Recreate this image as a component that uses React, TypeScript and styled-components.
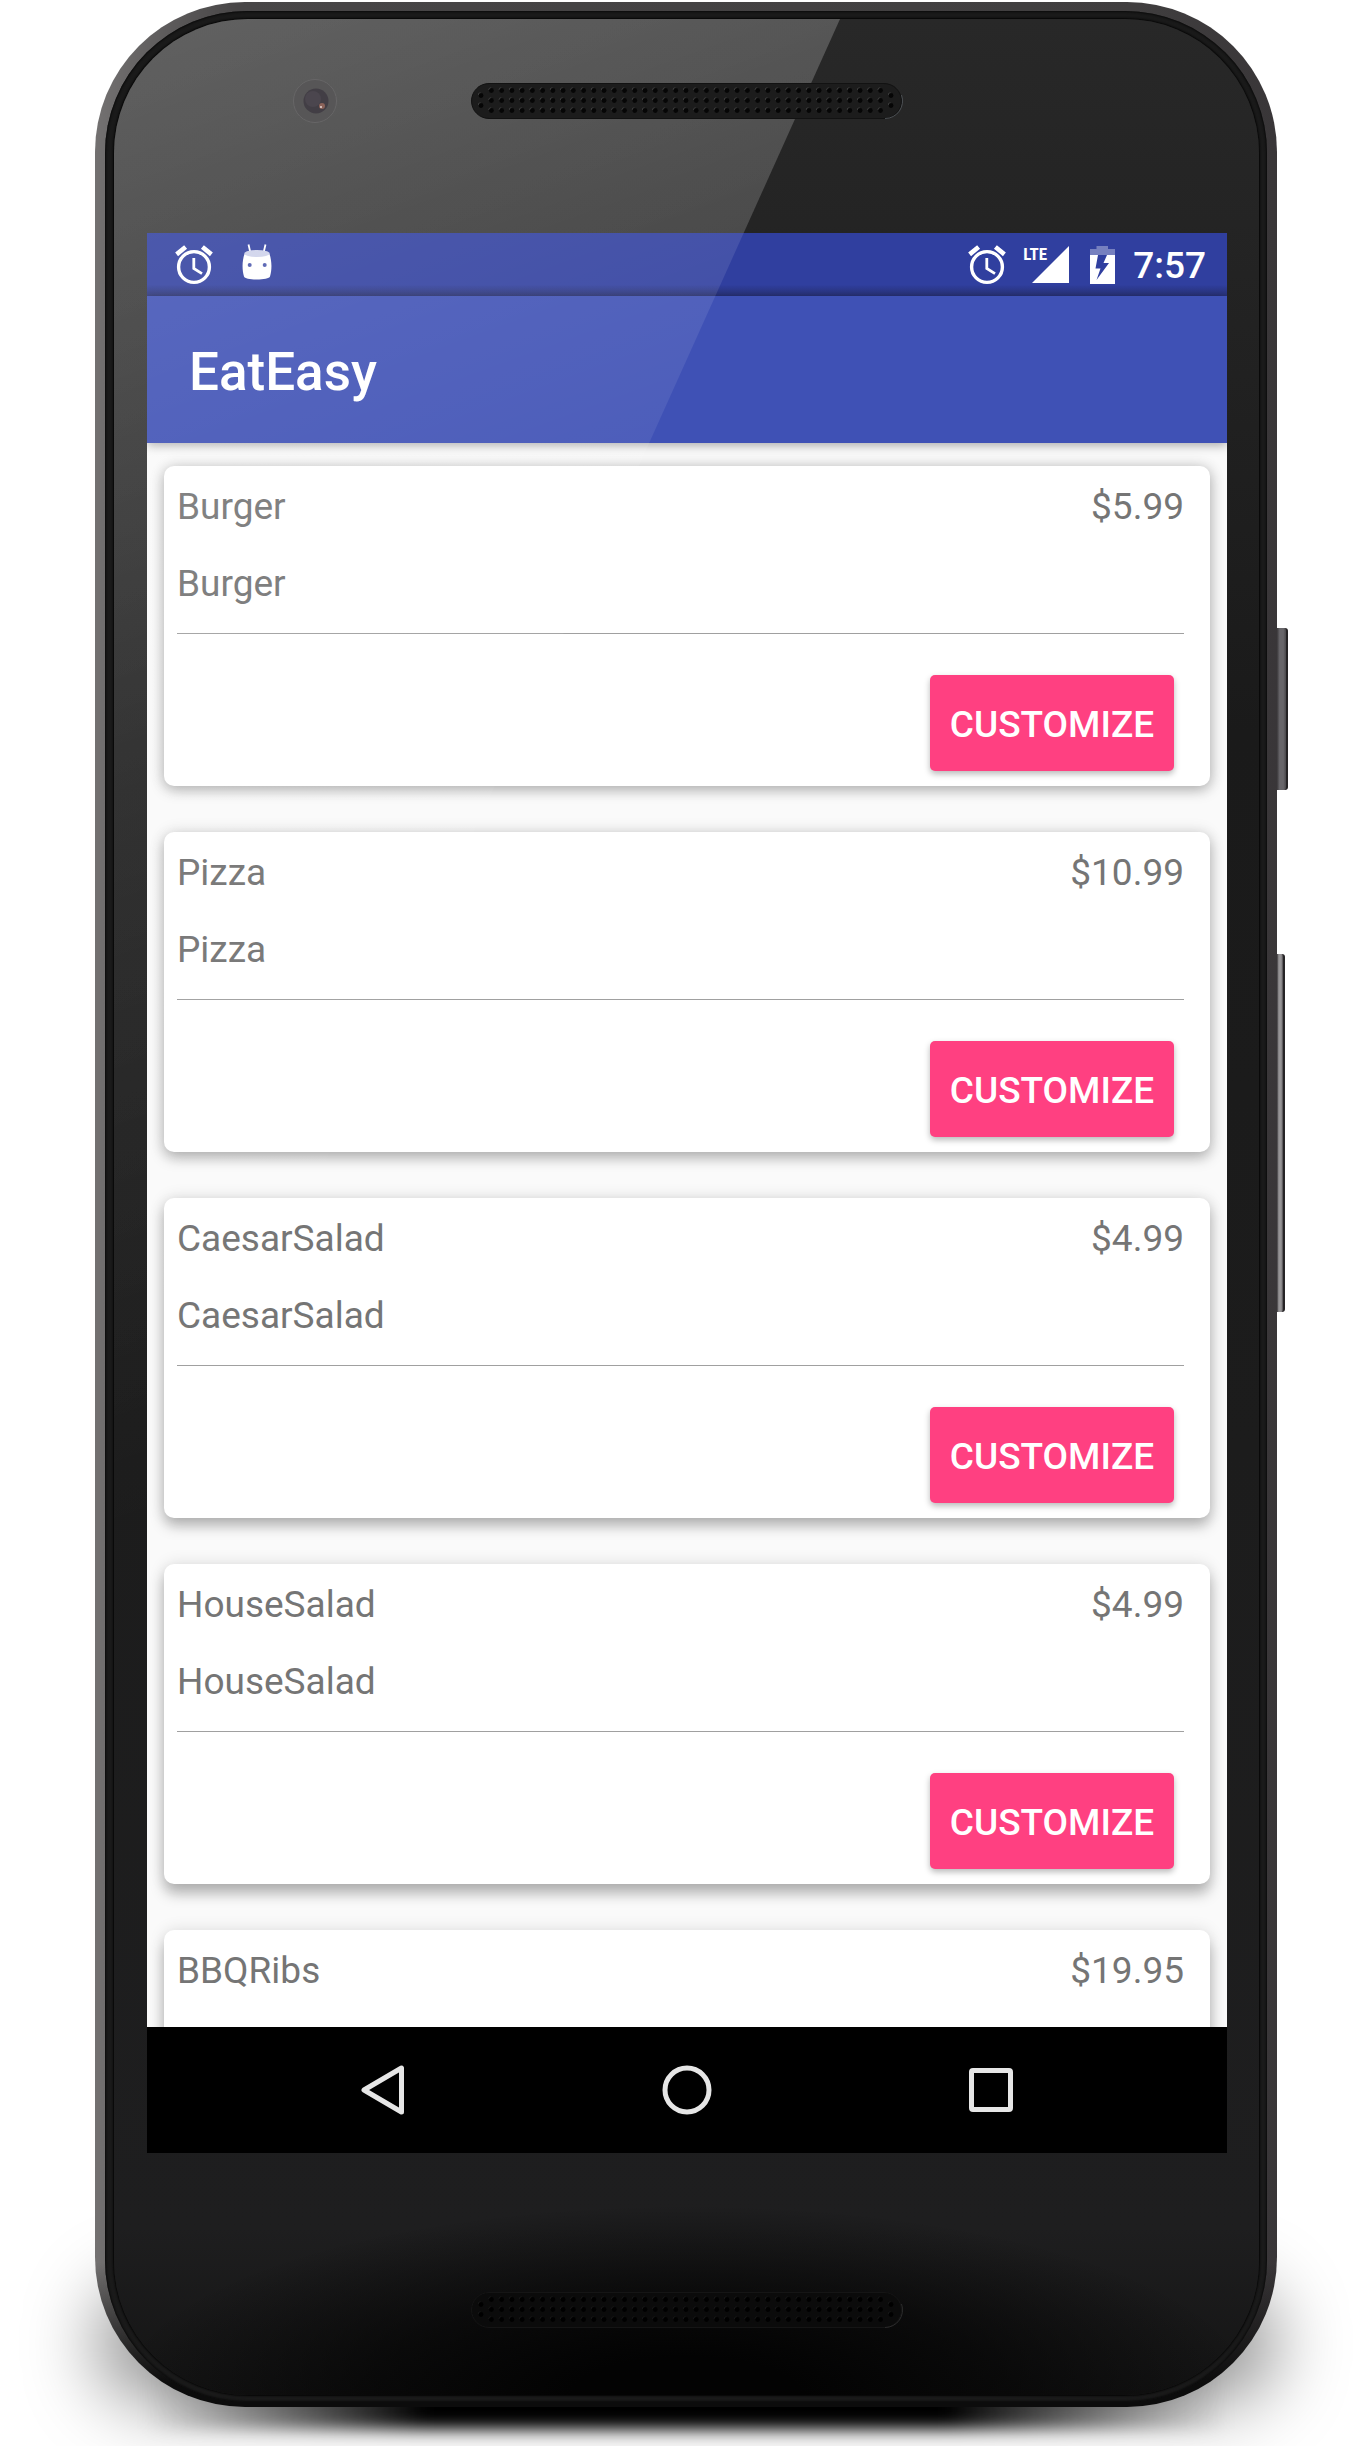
import React from "react";
import styled, { createGlobalStyle } from "styled-components";

const GlobalStyle = createGlobalStyle`
  * { box-sizing: border-box; }
  body {
    margin: 0;
    background: #fff;
    font-family: Roboto, "Noto Sans", "Liberation Sans", sans-serif;
  }
  button { font: inherit; border: 0; padding: 0; cursor: pointer; }
`;

const Page = styled.div`
  display: flex;
  justify-content: center;
  padding: 2px 93px 39px 95px;
  overflow: hidden;
`;

const Device = styled.div`
  position: relative;
  isolation: isolate;
  flex: 1;
  max-width: 1182px;
`;

const WideShadow = styled.div`
  position: absolute;
  z-index: -1;
  left: 0;
  right: 0;
  bottom: 4px;
  height: 120px;
  border-radius: 60px;
  background: rgba(0, 0, 0, 0.42);
  filter: blur(36px);
`;

const ContactShadow = styled.div`
  position: absolute;
  z-index: -1;
  left: 50px;
  right: 50px;
  bottom: -22px;
  height: 60px;
  background: linear-gradient(90deg, transparent, #000 26%, #000 74%, transparent);
  filter: blur(8px);
`;

const SideKey = styled.div<{ $top: number; $height: number; $width: number; $tone: string }>`
  position: absolute;
  left: 100%;
  top: ${(p) => p.$top}px;
  width: ${(p) => p.$width}px;
  height: ${(p) => p.$height}px;
  border-radius: 0 3px 3px 0;
  border-right: 2px solid #252325;
  background: linear-gradient(90deg, #3a383a, ${(p) => p.$tone} 30%, ${(p) => p.$tone} 70%, #4a484b);
`;

const Shell = styled.div`
  padding: 9px 10px 5px;
  border-radius: 150px;
  background:
    linear-gradient(180deg, transparent 94%, #0c0c0c 99%),
    linear-gradient(90deg, #737171, #484647 12%, #403e3f 88%, #393638);
`;

const Band = styled.div`
  padding: 8px 8px 7px 9px;
  border-radius: 142px;
  background: #1a1a1a;
  box-shadow: inset 0 0 2px 1px #0b0b0b;
`;

const Glass = styled.div`
  position: relative;
  overflow: hidden;
  padding: 0 32px 0 33px;
  border-radius: 134px;
  box-shadow: 0 0 2px 1px #050505;
  background:
    radial-gradient(ellipse 50% 190px at 50% 100%, #030303 20%, rgba(3, 3, 3, 0.65) 55%, transparent 100%),
    linear-gradient(180deg, #282828, #1a1a1a 30%, #1c1c1c 60%, #1e1e1f 93%, #141414);
`;

const Glare = styled.div`
  position: absolute;
  inset: 0 0 auto 0;
  height: 1620px;
  pointer-events: none;
  clip-path: polygon(0 0, 726px 0, 0 1613px);
`;

const BezelGlare = styled(Glare)`
  background: linear-gradient(160deg, rgba(255, 255, 255, 0.12), rgba(255, 255, 255, 0.06) 38%, rgba(255, 255, 255, 0) 75%);
`;

const ScreenGlare = styled(Glare)`
  z-index: 2;
  background: linear-gradient(160deg, rgba(255, 255, 255, 0.17), rgba(255, 255, 255, 0.05) 38%, rgba(255, 255, 255, 0) 70%);
`;

const TopBezel = styled.header`
  position: relative;
  z-index: 3;
  display: grid;
  grid-template-columns: 1fr auto 1fr;
  align-items: start;
  height: 214px;
  padding-top: 60px;
`;

const BottomBezel = styled.footer`
  display: flex;
  justify-content: center;
  padding: 139px 0 67px;
`;

const CameraSvg = styled.svg`
  display: block;
  margin-left: 146px;
`;

const GrilleSvg = styled.svg`
  display: block;
  margin-top: 4px;
`;

const BottomGrille = styled(GrilleSvg)`
  margin-top: 0;
`;

const Screen = styled.main`
  position: relative;
  z-index: 1;
  display: flex;
  flex-direction: column;
  aspect-ratio: 9 / 16;
  overflow: hidden;
  background: #fafafa;
`;

const StatusBar = styled.div`
  display: flex;
  justify-content: space-between;
  flex: none;
  height: 63px;
  padding: 0 21px 0 28px;
  color: #fff;
  background: linear-gradient(180deg, transparent 82%, rgba(30, 30, 60, 0.4)), #303f9f;
`;

const StatusGroup = styled.div<{ $gap: number }>`
  display: flex;
  align-items: center;
  gap: ${(p) => p.$gap}px;

  svg { display: block; }
`;

const Signal = styled.div`
  display: grid;
  width: 46px;

  > * { grid-area: 1 / 1; }
  svg { justify-self: end; }
`;

const NetworkType = styled.span`
  align-self: start;
  font: 700 17px/17px "Roboto Condensed", "Liberation Sans Narrow", Roboto, sans-serif;
`;

const Clock = styled.time`
  padding-top: 3px;
  font-size: 37px;
  line-height: 44px;
  font-weight: 500;
`;

const AppBar = styled.div`
  position: relative;
  z-index: 1;
  display: flex;
  align-items: center;
  flex: none;
  height: 147px;
  padding: 4px 42px 0;
  background: #3f51b5;
  box-shadow: 0 2px 10px rgba(0, 0, 0, 0.35);
`;

const Title = styled.h1`
  margin: 0;
  color: #fff;
  font-size: 53px;
  line-height: 62px;
  font-weight: 500;
`;

const List = styled.ul`
  display: flex;
  flex-direction: column;
  gap: 46px;
  flex: 1;
  min-height: 0;
  margin: 0;
  padding: 23px 17px;
  overflow: hidden auto;
  scrollbar-width: none;
  list-style: none;
`;

const Card = styled.li<{ $lift: number }>`
  flex: none;
  padding: 19px 26px 15px 13px;
  border-radius: 10px;
  background: #fff;
  box-shadow:
    0 ${(p) => p.$lift}px 14px rgba(0, 0, 0, 0.26),
    0 0 16px rgba(0, 0, 0, 0.12);
`;

const Row = styled.div`
  display: flex;
  justify-content: space-between;
  margin-bottom: 33px;
`;

const Text = styled.span`
  color: #757575;
  font-size: 37px;
  line-height: 44px;
`;

const Description = styled(Text)`
  display: block;
`;

const Rule = styled.hr`
  height: 1px;
  margin: 27px 0 41px;
  border: 0;
  background: #a0a0a0;
`;

const Customize = styled.button`
  display: block;
  width: 244px;
  height: 96px;
  margin: 0 10px 0 auto;
  padding-top: 4px;
  border-radius: 5px;
  color: #fff;
  background: #ff4081;
  font-size: 37px;
  font-weight: 500;
  line-height: 44px;
  text-transform: uppercase;
  box-shadow: 0 3px 6px rgba(0, 0, 0, 0.28);
`;

const NavBar = styled.nav`
  display: flex;
  flex: none;
  height: 126px;
  padding: 0 84px;
  background: #000;
`;

const NavButton = styled.button`
  display: grid;
  place-items: center;
  flex: 1;
  background: none;
`;

const Alarm = () => (
  <svg width="38" height="44" viewBox="3 0 38 44" fill="none" stroke="#fff" aria-hidden="true">
    <circle cx="22" cy="24" r="15.4" strokeWidth="3.4" />
    <path d="M21.8 15V25.4L30 30.6" strokeWidth="2.8" />
    <path d="M4.6 11.4L13.6 4M39.4 11.4L30.4 4" strokeWidth="4.6" />
  </svg>
);

const Robot = () => (
  <svg width="30" height="42" viewBox="0 0 30 42" aria-hidden="true">
    <path d="M6.5 0.5L8.5 9M23.5 0.5L21.5 9" stroke="#fff" strokeWidth="1.8" />
    <path d="M2.5 10C0 17 0 26 2 32.5C3 36.5 27 36.5 28 32.5C30 26 30 17 27.5 10Z" fill="#fff" />
    <ellipse cx="15" cy="9.5" rx="12.7" ry="3.6" fill="#cdd1ea" />
    <circle cx="7.7" cy="21" r="2" fill="#4a57ad" />
    <circle cx="22.7" cy="21" r="2" fill="#4a57ad" />
  </svg>
);

const Battery = () => (
  <svg width="30" height="38" viewBox="0 0 30 38" aria-hidden="true">
    <path d="M4 9V3H10.5V0H22V3H29V9Z" fill="#7680bf" />
    <path d="M4 9H29V38H4Z" fill="#fff" />
    <path d="M12 9L9.5 22.5H14.5L10.5 34L23 17H17.5L21 9Z" fill="#303f9f" />
  </svg>
);

const Camera = () => (
  <CameraSvg width="44" height="44" viewBox="0 0 44 44" aria-hidden="true">
    <circle cx="22" cy="22" r="21.5" fill="#575657" stroke="#676667" />
    <circle cx="23" cy="22" r="12.5" fill="#423e45" />
    <circle cx="20" cy="20" r="8" fill="#4b464e" />
    <circle cx="29" cy="27" r="3" fill="#8a6259" />
    <circle cx="28" cy="28" r="1" fill="#e6d8d6" />
  </CameraSvg>
);

const holes: Array<[number, number]> = [[10, 12.5], [10, 22.5], [420, 12.5], [420, 22.5]];
for (let column = 0; column < 39; column += 1) {
  for (const y of [7.5, 17.5, 27.5]) holes.push([20.4 + column * 10.24, y]);
}

const Grille = ({ dim = false }: { dim?: boolean }) => {
  const Frame = dim ? BottomGrille : GrilleSvg;
  return (
    <Frame width="432" height="36" viewBox="0 0 432 36" aria-hidden="true">
      <rect
        x="0.5"
        y="0.5"
        width="430"
        height="35"
        rx="17.5"
        fill={dim ? "#0b0b0b" : "#1c1c1c"}
        stroke={dim ? "#151515" : "#121212"}
      />
      <path d="M414 35.5A17.5 17.5 0 0 0 430.5 12" fill="none" stroke={dim ? "#2c2c2c" : "#4c5054"} />
      {holes.map(([x, y]) => (
        <g key={`${x}-${y}`}>
          <circle cx={x - 1} cy={y - 1.2} r="1.8" fill={dim ? "#1c1c1c" : "#484848"} />
          <circle cx={x} cy={y} r="2.4" fill={dim ? "#000" : "#060606"} />
        </g>
      ))}
    </Frame>
  );
};

const menu = [
  { name: "Burger", price: "$5.99" },
  { name: "Pizza", price: "$10.99" },
  { name: "CaesarSalad", price: "$4.99" },
  { name: "HouseSalad", price: "$4.99" },
  { name: "BBQRibs", price: "$19.95" },
];

export default function App() {
  return (
    <>
      <GlobalStyle />
      <Page>
        <Device>
          <WideShadow />
          <ContactShadow />
          <SideKey $top={626} $height={162} $width={11} $tone="#68666a" />
          <SideKey $top={952} $height={358} $width={8} $tone="#969496" />
          <Shell>
            <Band>
              <Glass>
                <BezelGlare />
                <TopBezel>
                  <Camera />
                  <Grille />
                </TopBezel>
                <Screen>
                  <StatusBar>
                    <StatusGroup $gap={29}>
                      <Alarm />
                      <Robot />
                    </StatusGroup>
                    <StatusGroup $gap={17}>
                      <Alarm />
                      <Signal>
                        <svg width="37" height="37" viewBox="0 0 37 37" aria-hidden="true">
                          <path d="M37 0V37H0Z" fill="#fff" />
                        </svg>
                        <NetworkType>LTE</NetworkType>
                      </Signal>
                      <Battery />
                      <Clock>7:57</Clock>
                    </StatusGroup>
                  </StatusBar>
                  <AppBar>
                    <Title>EatEasy</Title>
                  </AppBar>
                  <List>
                    {menu.map((item, index) => (
                      <Card key={item.name} $lift={4 + index * 2}>
                        <Row>
                          <Text>{item.name}</Text>
                          <Text>{item.price}</Text>
                        </Row>
                        <Description>{item.name}</Description>
                        <Rule />
                        <Customize type="button">Customize</Customize>
                      </Card>
                    ))}
                  </List>
                  <NavBar>
                    <NavButton type="button" aria-label="Back">
                      <svg width="50" height="50" viewBox="0 0 50 50" fill="none" stroke="#e6e6e6" strokeWidth="5" strokeLinejoin="round">
                        <path d="M43.5 3V47L6 25Z" />
                      </svg>
                    </NavButton>
                    <NavButton type="button" aria-label="Home">
                      <svg width="50" height="50" viewBox="0 0 50 50" fill="none" stroke="#e6e6e6" strokeWidth="5">
                        <circle cx="25" cy="25" r="22" />
                      </svg>
                    </NavButton>
                    <NavButton type="button" aria-label="Recent apps">
                      <svg width="50" height="50" viewBox="0 0 50 50" fill="none" stroke="#e6e6e6" strokeWidth="5">
                        <rect x="5.5" y="5.5" width="39" height="39" rx="1.5" />
                      </svg>
                    </NavButton>
                  </NavBar>
                </Screen>
                <BottomBezel>
                  <Grille dim />
                </BottomBezel>
                <ScreenGlare />
              </Glass>
            </Band>
          </Shell>
        </Device>
      </Page>
    </>
  );
}
